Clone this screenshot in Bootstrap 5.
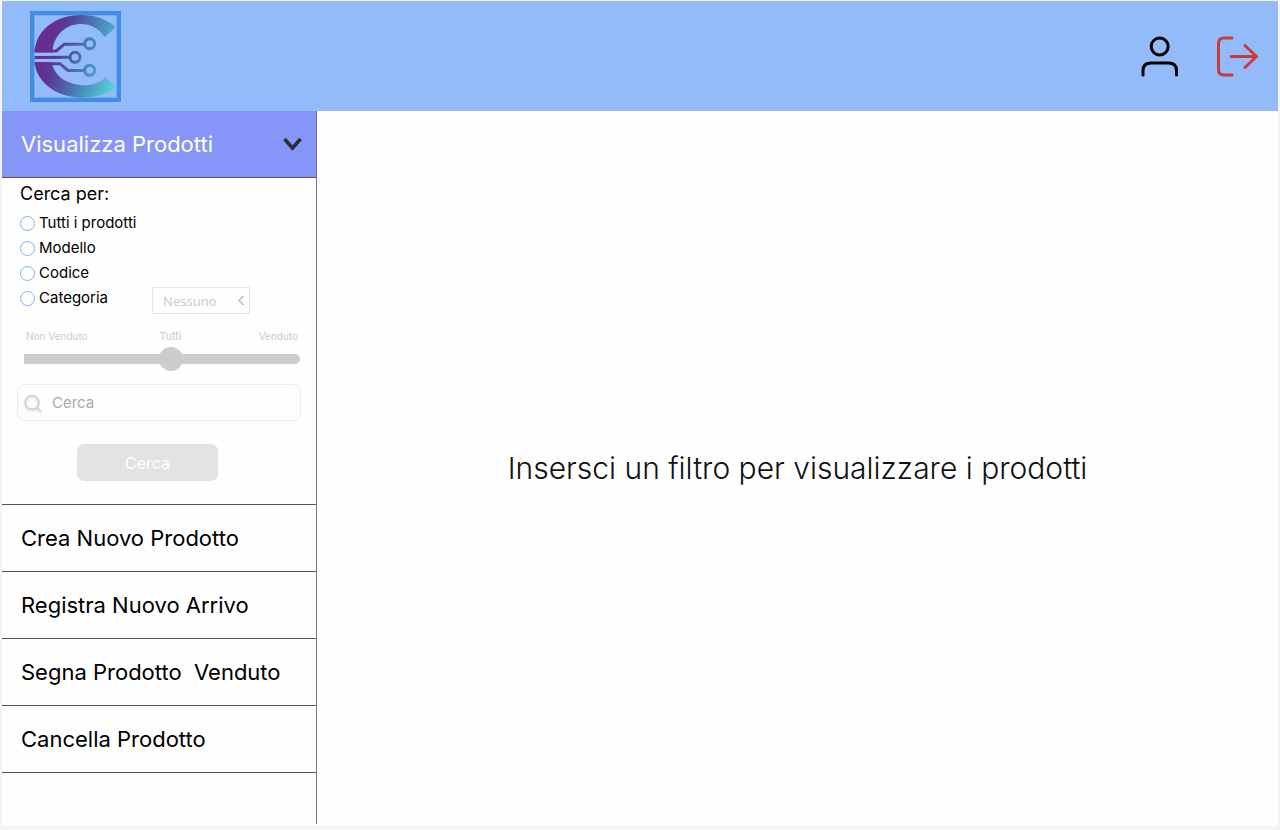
<!DOCTYPE html>
<html lang="it">
<head>
<meta charset="utf-8">
<meta name="viewport" content="width=device-width, initial-scale=1">
<title>Gestione prodotti</title>
<link href="https://cdn.jsdelivr.net/npm/bootstrap@5.3.0/dist/css/bootstrap.min.css" rel="stylesheet">
<style>
  body { font-family: Inter, "Liberation Sans", sans-serif; background: #f4f4f4; color: #000; padding: 1px 2px 4px; }
  .app-shell { background: #fefefe; }
  .top-bar { background: #93bbfa; height: 110px; padding: 0 18px 0 28px; }
  .icon-btn { border: 0; background: none; padding: 0; line-height: 0; }
  .side-bar { width: 315px; border-right: 1px solid #777; margin-bottom: 2px; }
  .menu-item { height: 67px; padding: 0 14px 0 19px; border: 0; border-bottom: 1px solid #555; background: none; color: #000; font-size: 22px; line-height: 28px; text-align: left; white-space: pre; }
  .menu-item.open { background: #8696f8; color: #fff; }
  .filter-panel { height: 327px; padding: 4px 15px 0; border-bottom: 1px solid #555; }
  .filter-title { font-size: 18px; line-height: 24px; margin: 0 3px 5px; float: none; }
  .filter-option { height: 25px; padding-left: 3px; font-size: 15px; }
  .filter-option input { appearance: none; width: 15px; height: 15px; margin: 0 4px 0 0; border: 1px solid #7fb0fa; border-radius: 50%; background: #fff; }
  .filter-option input:checked { background: #7fb0fa; box-shadow: inset 0 0 0 3px #fff; }
  .category-box { margin: 4px 0 0 44px; }
  .category-box select { appearance: none; width: 98px; height: 27px; padding: 0 10px; border: 1px solid #e6e6e6; border-radius: 0; background: #fefefe; color: #ccc; opacity: 1; font: 13px "Noto Sans", sans-serif; }
  .category-box svg { right: 5px; top: 7px; }
  .range-labels { margin: 18px 3px 0 9px; font-size: 10px; line-height: 14px; color: #ccc; }
  .range-labels .label-left { flex: 8 1 0; }
  .range-labels .label-right { flex: 7 1 0; }
  .range-labels label { font-size: 11px; }
  .sold-range { appearance: none; display: block; width: 276px; height: 24px; margin: 4px 0 0 7px; background: none; }
  .sold-range::-webkit-slider-runnable-track { height: 10px; background: #ccc; border-radius: 0 5px 5px 0; }
  .sold-range::-webkit-slider-thumb { appearance: none; width: 24px; height: 24px; margin-top: -7px; border-radius: 50%; background: #ccc; }
  .search-box { margin-top: 13px; }
  .search-box svg { left: 7px; top: 9px; filter: drop-shadow(0 2px 1px #ddd); }
  .search-box input { height: 37px; width: 284px; padding: 0 12px 0 34px; border: 1px solid #ebebeb; border-radius: 8px; background: #fefefe; color: #333; font-size: 15px; }
  .search-box input::placeholder { color: #aaa; opacity: 1; }
  .search-btn { display: block; width: 141px; height: 37px; margin: 23px 0 0 60px; border: 0; border-radius: 7px; background: #e3e3e3; color: #fff; font-size: 16px; }
  .empty-note { padding-bottom: 2px; font-size: 30px; line-height: 40px; font-weight: 300; color: #111; }
</style>
</head>
<body class="min-vh-100 d-flex flex-column">
<div class="app-shell d-flex flex-column flex-grow-1">
  <header class="top-bar d-flex align-items-center justify-content-between">
    <a href="#" aria-label="Home" class="d-flex">
      <svg width="91" height="91" viewBox="90 33 273 273">
        <defs>
          <linearGradient id="brand" gradientUnits="userSpaceOnUse" x1="130" y1="150" x2="345" y2="215">
            <stop offset="0" stop-color="#652d8e"/><stop offset=".2" stop-color="#583b98"/><stop offset=".6" stop-color="#4684b8"/><stop offset="1" stop-color="#54cbd8"/>
          </linearGradient>
        </defs>
        <rect x="96" y="39" width="261" height="261" fill="none" stroke="#3f8de5" stroke-width="12"/>
        <rect x="104" y="46" width="245" height="246" fill="none" stroke="#69a6f2" stroke-width="2"/>
        <g fill="url(#brand)">
          <path d="M104 157C106 92 166 45 243 45C287 45 322 58 348 82L314 111C295 84 270 71 239 72C196 74 164 105 158 148L158 157Z"/>
          <path d="M104 187C108 244 166 293 247 293C287 293 322 282 348 262L316 232C298 250 276 257 245 256C202 253 169 231 158 199L158 187Z"/>
        </g>
        <g fill="none" stroke="url(#brand)" stroke-width="9">
          <path d="M104 153H169L193 132.500H252M104 172.500L207 172M104 191H180L204 211.500H252"/>
          <circle cx="269" cy="131" r="15"/><circle cx="225" cy="172" r="15"/><circle cx="269" cy="211" r="15"/>
        </g>
      </svg>
    </a>
    <div class="d-flex align-items-center">
      <button class="icon-btn me-4" type="button" aria-label="Profilo">
        <svg width="54" height="54" viewBox="1 1 54 54" fill="none" stroke="#000" stroke-width="3" stroke-linecap="round"><circle cx="26.700" cy="18.500" r="8.500"/><path d="M10 47V42.500Q10 35 18 35H35.500Q43.500 35 43.500 42.500V47"/></svg>
      </button>
      <button class="icon-btn" type="button" aria-label="Esci">
        <svg width="48" height="54" viewBox="0 1 48 54" fill="none" stroke="#c73c38" stroke-width="3" stroke-linecap="round" stroke-linejoin="round"><path d="M20 10H12Q6.500 10 6.500 15.500V41.500Q6.500 47 12 47H20M19 28.500H44.500M33 17.500L44.500 28.500L33 39.500"/></svg>
      </button>
    </div>
  </header>
  <div class="d-flex flex-grow-1">
    <nav class="side-bar d-flex flex-column flex-shrink-0">
      <button class="menu-item open d-flex align-items-center justify-content-between" type="button" aria-expanded="true">Visualizza Prodotti<svg width="19" height="14" viewBox="0 0 19 14" fill="none" stroke="#2b2d35" stroke-width="3.500"><path d="M1.500 2L9.500 11L17.500 2"/></svg></button>
      <form class="filter-panel">
        <fieldset>
          <legend class="filter-title">Cerca per:</legend>
          <div class="filter-option d-flex align-items-center"><input type="radio" name="filtro" id="f1"><label for="f1">Tutti i prodotti</label></div>
          <div class="filter-option d-flex align-items-center"><input type="radio" name="filtro" id="f2"><label for="f2">Modello</label></div>
          <div class="filter-option d-flex align-items-center"><input type="radio" name="filtro" id="f3"><label for="f3">Codice</label></div>
          <div class="filter-option d-flex align-items-center"><input type="radio" name="filtro" id="f4"><label for="f4">Categoria</label>
            <div class="category-box position-relative">
              <select aria-label="Categoria" disabled><option>Nessuno</option></select>
              <svg class="position-absolute" width="8" height="13" viewBox="0 0 8 13" fill="none" stroke="#bbb" stroke-width="1.500"><path d="M6.500 2L2 6.500L6.500 11"/></svg>
            </div>
          </div>
        </fieldset>
        <div class="range-labels d-flex"><span class="label-left">Non Venduto</span><label for="stato">Tutti</label><span class="label-right text-end">Venduto</span></div>
        <input class="sold-range" type="range" id="stato" min="0" max="1000" value="536" disabled>
        <div class="search-box position-relative">
          <svg class="position-absolute" width="20" height="22" viewBox="0 0 20 22" fill="none" stroke="#ccc" stroke-width="1.500"><circle cx="8" cy="9.500" r="6.800"/><path d="M13 14.500L17 18.500"/></svg>
          <input type="text" placeholder="Cerca" aria-label="Cerca">
        </div>
        <button class="search-btn" type="submit" disabled>Cerca</button>
      </form>
      <button class="menu-item" type="button">Crea Nuovo Prodotto</button>
      <button class="menu-item" type="button">Registra Nuovo Arrivo</button>
      <button class="menu-item" type="button">Segna Prodotto  Venduto</button>
      <button class="menu-item" type="button">Cancella Prodotto</button>
    </nav>
    <main class="flex-grow-1 d-flex align-items-center justify-content-center">
      <p class="empty-note m-0">Insersci un filtro per visualizzare i prodotti</p>
    </main>
  </div>
</div>
<script src="https://cdn.jsdelivr.net/npm/bootstrap@5.3.0/dist/js/bootstrap.bundle.min.js"></script>
</body>
</html>
